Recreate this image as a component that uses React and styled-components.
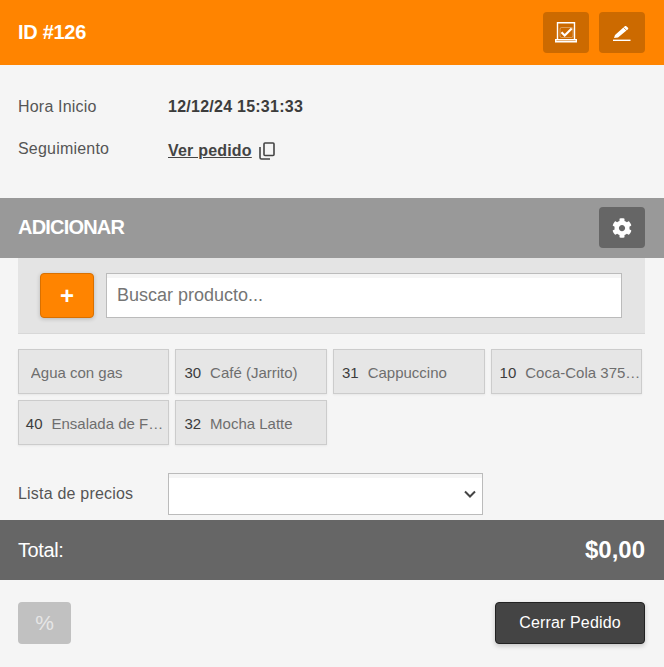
import styled, { createGlobalStyle } from 'styled-components'
import { FaCog } from 'react-icons/fa'

const GlobalStyle = createGlobalStyle`
  html, body {
    margin: 0;
    padding: 0;
    background: #f5f5f5;
    font-family: "Liberation Sans", Arial, sans-serif;
    color: #444;
  }
`;

const chevron = `url("data:image/svg+xml,%3Csvg xmlns='http://www.w3.org/2000/svg' width='12' height='8' viewBox='0 0 12 8'%3E%3Cpath d='M1 1.5l5 5 5-5' fill='none' stroke='%23444' stroke-width='2'/%3E%3C/svg%3E")`;

const Page = styled.div`
  width: 664px;
  height: 667px;
  overflow: hidden;
  background: #f5f5f5;
`;

const Bar = styled.div`
  display: flex;
  align-items: center;
  justify-content: space-between;
  height: ${p => p.$height}px;
  box-sizing: border-box;
  padding: 0 19px ${p => p.$lift || 0}px 18px;
  background: ${p => p.$color};
  color: white;
`;

const Title = styled.h1`
  margin: 0;
  font-size: 20px;
  font-weight: 700;
  letter-spacing: -0.3px;
`;

const SectionTitle = styled.h2`
  margin: 0;
  font-size: 20px;
  font-weight: 700;
  letter-spacing: -0.8px;
`;

const BarActions = styled.div`
  display: flex;
  gap: 10px;
`;

const IconButton = styled.button`
  display: flex;
  align-items: center;
  justify-content: center;
  width: 46px;
  height: 41px;
  padding: 0;
  border: 0;
  border-radius: 4px;
  background: ${p => p.$color};
  color: white;
`;

const Info = styled.div`
  padding: 30px 18px 0;
  height: 133px;
  box-sizing: border-box;
`;

const InfoRow = styled.div`
  display: flex;
  align-items: center;
  height: 24px;
  margin-bottom: 18px;
`;

const Label = styled.span`
  width: 150px;
  font-size: 16px;
  letter-spacing: 0.2px;
  color: #555;
  flex-shrink: 0;
`;

const Value = styled.span`
  font-size: 16px;
  font-weight: 700;
  letter-spacing: 0.25px;
  color: #3c3c3c;
`;

const TrackLink = styled.a`
  display: flex;
  align-items: center;
  gap: 7px;
  margin-top: 3px;
  font-size: 16px;
  font-weight: 700;
  letter-spacing: 0.2px;
  color: #444;
  span {
    text-decoration: underline;
  }
`;

const SearchPanel = styled.div`
  display: flex;
  gap: 12px;
  height: 76px;
  box-sizing: border-box;
  margin: 0 19px 0 18px;
  padding: 15px 23px 15px 22px;
  background: #e4e4e4;
  border-bottom: 1px solid #d8d8d8;
`;

const AddButton = styled.button`
  width: 54px;
  height: 45px;
  flex-shrink: 0;
  padding: 0;
  border: 1px solid #d97000;
  border-radius: 4px;
  background: #ff8400;
  color: white;
  font-family: inherit;
  font-size: 24px;
  font-weight: 700;
  line-height: 1;
  box-shadow: 0 1px 4px rgba(0, 0, 0, 0.2);
`;

const SearchInput = styled.input`
  flex: 1;
  min-width: 0;
  height: 45px;
  box-sizing: border-box;
  padding: 0 10px;
  border: 1px solid #bbb;
  background: white;
  box-shadow: inset 0 4px 0 #f5f5f5;
  font-family: inherit;
  font-size: 18px;
  color: #444;
  &::placeholder {
    color: #757575;
    opacity: 1;
  }
`;

const Products = styled.div`
  display: grid;
  grid-template-columns: repeat(4, 151.6px);
  grid-auto-rows: 45px;
  gap: 6px;
  padding: 15px 0 0 17.8px;
`;

const ProductChip = styled.div`
  display: flex;
  align-items: center;
  gap: 9px;
  box-sizing: border-box;
  padding: 1px ${p => p.$right}px 0 ${p => p.$left}px;
  border: 1px solid #ccc;
  background: #e6e6e6;
  box-shadow: 0 1px 2px rgba(0, 0, 0, 0.06);
  font-size: 15px;
  white-space: nowrap;
  overflow: hidden;
`;

const ProductCode = styled.span`
  color: #3c3c3c;
  flex-shrink: 0;
`;

const ProductName = styled.span`
  color: #6e6e6e;
  overflow: hidden;
  text-overflow: ellipsis;
`;

const PriceRow = styled.div`
  display: flex;
  align-items: center;
  height: 42px;
  margin: 28px 0 5px;
  padding-left: 18px;
`;

const PriceSelect = styled.select`
  appearance: none;
  width: 315px;
  height: 42px;
  box-sizing: border-box;
  border: 1px solid #bbb;
  border-radius: 0;
  background: ${chevron} no-repeat right 6px center, white;
  box-shadow: inset 0 4px 0 #f5f5f5;
  font-family: inherit;
  font-size: 16px;
`;

const TotalLabel = styled.span`
  font-size: 20px;
  letter-spacing: -0.4px;
`;

const TotalValue = styled.span`
  font-size: 24px;
  font-weight: 700;
`;

const Footer = styled.div`
  display: flex;
  align-items: center;
  justify-content: space-between;
  padding: 22px 19px 0 18px;
`;

const DiscountButton = styled.button`
  width: 53px;
  height: 42px;
  padding: 0;
  border: 0;
  border-radius: 4px;
  background: #c1c1c1;
  color: #e6e6e6;
  font-family: inherit;
  font-size: 21px;
`;

const CloseButton = styled.button`
  width: 150px;
  height: 42px;
  padding: 0;
  border: 1px solid #222;
  border-radius: 4px;
  background: #444;
  color: white;
  font-family: inherit;
  font-size: 16px;
  letter-spacing: 0.15px;
  box-shadow: 0 2px 5px rgba(0, 0, 0, 0.2);
`;

const ChecklistIcon = () => (
  <svg width="22" height="22" viewBox="0 0 22 22" fill="none" stroke="white">
    <path d="M2.5 17V.7h17V17" strokeWidth="1.4" />
    <path d="M.7 17.7h20.6v2H.7z" strokeWidth="1.4" />
    <rect x="5" y="5.5" width="13" height="10" rx="1.5" strokeWidth="1" strokeOpacity="0.35" />
    <path d="M6.5 10.3l3.2 3.2 7-7" strokeWidth="2.2" />
  </svg>
);

const PencilIcon = () => (
  <svg width="18" height="18" viewBox="0 0 18 18" fill="white">
    <path d="M1 14l1-3L11.8 2.2c.5-.4 1.1-.4 1.5 0l1.7 1.6c.4.4.4 1 0 1.4L5 13.6z" />
    <path d="M10.5 3.5l3.3 3.1" stroke="#cc6a00" strokeWidth="0.7" />
    <rect x="0" y="15.6" width="17.5" height="1.4" />
  </svg>
);

const CopyIcon = () => (
  <svg width="16" height="18" viewBox="0 0 16 18" fill="none" stroke="#444" strokeWidth="1.6">
    <rect x="5" y="1" width="10" height="12.5" rx="1" />
    <path d="M1 5v10.5a1.5 1.5 0 0 0 1.5 1.5H11" />
  </svg>
);

const products = [
  { name: 'Agua con gas', left: 12, right: 8 },
  { code: 30, name: 'Café (Jarrito)', left: 8, right: 8 },
  { code: 31, name: 'Cappuccino', left: 8, right: 8 },
  { code: 10, name: 'Coca-Cola 375ml', left: 8, right: 0.7 },
  { code: 40, name: 'Ensalada de Frutas', left: 7, right: 2 },
  { code: 32, name: 'Mocha Latte', left: 8, right: 8 },
];

const App = () => {
  return <Page>
    <GlobalStyle />
    <Bar $height={65} $color="#ff8400">
      <Title>ID #126</Title>
      <BarActions>
        <IconButton $color="#cc6a00"><ChecklistIcon /></IconButton>
        <IconButton $color="#cc6a00"><PencilIcon /></IconButton>
      </BarActions>
    </Bar>

    <Info>
      <InfoRow>
        <Label>Hora Inicio</Label>
        <Value>12/12/24 15:31:33</Value>
      </InfoRow>
      <InfoRow>
        <Label>Seguimiento</Label>
        <TrackLink>
          <span>Ver pedido</span>
          <CopyIcon />
        </TrackLink>
      </InfoRow>
    </Info>

    <Bar $height={60} $color="#999" $lift={1}>
      <SectionTitle>ADICIONAR</SectionTitle>
      <IconButton $color="#666"><FaCog size={20} /></IconButton>
    </Bar>

    <SearchPanel>
      <AddButton>+</AddButton>
      <SearchInput placeholder="Buscar producto..." />
    </SearchPanel>

    <Products>
      {products.map(product => (
        <ProductChip key={product.name} $left={product.left} $right={product.right}>
          {product.code && <ProductCode>{product.code}</ProductCode>}
          <ProductName>{product.name}</ProductName>
        </ProductChip>
      ))}
    </Products>

    <PriceRow>
      <Label>Lista de precios</Label>
      <PriceSelect />
    </PriceRow>

    <Bar $height={60} $color="#666">
      <TotalLabel>Total:</TotalLabel>
      <TotalValue>$0,00</TotalValue>
    </Bar>

    <Footer>
      <DiscountButton>%</DiscountButton>
      <CloseButton>Cerrar Pedido</CloseButton>
    </Footer>
  </Page>
}

export default App
